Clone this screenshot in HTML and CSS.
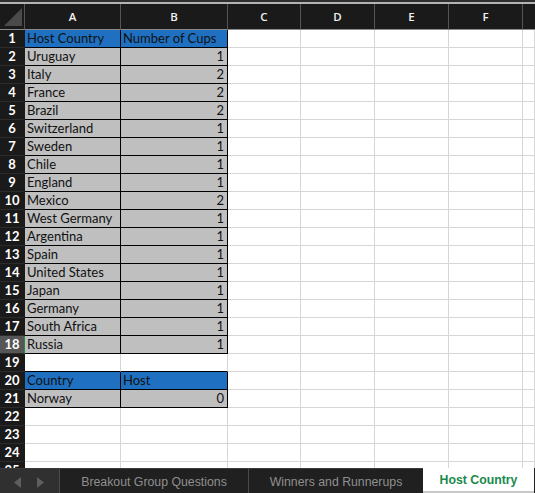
FILE: index.html
```html
<!DOCTYPE html>
<html>
<head>
<meta charset="utf-8">
<link rel="stylesheet" href="styles.css">
</head>
<body>
<div class="topstrip"></div>
<div class="sheet">
  <div class="row hdr">
    <div class="corner"><svg width="25" height="26" viewBox="0 0 25 26"><polygon points="4,22 22,22 22,4" fill="#4a4a4a"/></svg></div>
    <div class="ch">A</div><div class="ch">B</div><div class="ch">C</div><div class="ch">D</div><div class="ch">E</div><div class="ch">F</div><div class="ch last"></div>
  </div>
  <div class="row"><div class="rh">1</div><div class="c h">Host Country</div><div class="c h">Number of Cups</div><div class="c"></div><div class="c"></div><div class="c"></div><div class="c"></div><div class="c"></div></div>
  <div class="row"><div class="rh">2</div><div class="c g">Uruguay</div><div class="c g n">1</div><div class="c"></div><div class="c"></div><div class="c"></div><div class="c"></div><div class="c"></div></div>
  <div class="row"><div class="rh">3</div><div class="c g">Italy</div><div class="c g n">2</div><div class="c"></div><div class="c"></div><div class="c"></div><div class="c"></div><div class="c"></div></div>
  <div class="row"><div class="rh">4</div><div class="c g">France</div><div class="c g n">2</div><div class="c"></div><div class="c"></div><div class="c"></div><div class="c"></div><div class="c"></div></div>
  <div class="row"><div class="rh">5</div><div class="c g">Brazil</div><div class="c g n">2</div><div class="c"></div><div class="c"></div><div class="c"></div><div class="c"></div><div class="c"></div></div>
  <div class="row"><div class="rh">6</div><div class="c g">Switzerland</div><div class="c g n">1</div><div class="c"></div><div class="c"></div><div class="c"></div><div class="c"></div><div class="c"></div></div>
  <div class="row"><div class="rh">7</div><div class="c g">Sweden</div><div class="c g n">1</div><div class="c"></div><div class="c"></div><div class="c"></div><div class="c"></div><div class="c"></div></div>
  <div class="row"><div class="rh">8</div><div class="c g">Chile</div><div class="c g n">1</div><div class="c"></div><div class="c"></div><div class="c"></div><div class="c"></div><div class="c"></div></div>
  <div class="row"><div class="rh">9</div><div class="c g">England</div><div class="c g n">1</div><div class="c"></div><div class="c"></div><div class="c"></div><div class="c"></div><div class="c"></div></div>
  <div class="row"><div class="rh">10</div><div class="c g">Mexico</div><div class="c g n">2</div><div class="c"></div><div class="c"></div><div class="c"></div><div class="c"></div><div class="c"></div></div>
  <div class="row"><div class="rh">11</div><div class="c g">West Germany</div><div class="c g n">1</div><div class="c"></div><div class="c"></div><div class="c"></div><div class="c"></div><div class="c"></div></div>
  <div class="row"><div class="rh">12</div><div class="c g">Argentina</div><div class="c g n">1</div><div class="c"></div><div class="c"></div><div class="c"></div><div class="c"></div><div class="c"></div></div>
  <div class="row"><div class="rh">13</div><div class="c g">Spain</div><div class="c g n">1</div><div class="c"></div><div class="c"></div><div class="c"></div><div class="c"></div><div class="c"></div></div>
  <div class="row"><div class="rh">14</div><div class="c g">United States</div><div class="c g n">1</div><div class="c"></div><div class="c"></div><div class="c"></div><div class="c"></div><div class="c"></div></div>
  <div class="row"><div class="rh">15</div><div class="c g">Japan</div><div class="c g n">1</div><div class="c"></div><div class="c"></div><div class="c"></div><div class="c"></div><div class="c"></div></div>
  <div class="row"><div class="rh">16</div><div class="c g">Germany</div><div class="c g n">1</div><div class="c"></div><div class="c"></div><div class="c"></div><div class="c"></div><div class="c"></div></div>
  <div class="row"><div class="rh">17</div><div class="c g">South Africa</div><div class="c g n">1</div><div class="c"></div><div class="c"></div><div class="c"></div><div class="c"></div><div class="c"></div></div>
  <div class="row"><div class="rh sel">18</div><div class="c g">Russia</div><div class="c g n">1</div><div class="c"></div><div class="c"></div><div class="c"></div><div class="c"></div><div class="c"></div></div>
  <div class="row"><div class="rh">19</div><div class="c bb"></div><div class="c bb"></div><div class="c"></div><div class="c"></div><div class="c"></div><div class="c"></div><div class="c"></div></div>
  <div class="row"><div class="rh">20</div><div class="c h">Country</div><div class="c h">Host</div><div class="c"></div><div class="c"></div><div class="c"></div><div class="c"></div><div class="c"></div></div>
  <div class="row"><div class="rh">21</div><div class="c g">Norway</div><div class="c g n">0</div><div class="c"></div><div class="c"></div><div class="c"></div><div class="c"></div><div class="c"></div></div>
  <div class="row"><div class="rh">22</div><div class="c"></div><div class="c"></div><div class="c"></div><div class="c"></div><div class="c"></div><div class="c"></div><div class="c"></div></div>
  <div class="row"><div class="rh">23</div><div class="c"></div><div class="c"></div><div class="c"></div><div class="c"></div><div class="c"></div><div class="c"></div><div class="c"></div></div>
  <div class="row"><div class="rh">24</div><div class="c"></div><div class="c"></div><div class="c"></div><div class="c"></div><div class="c"></div><div class="c"></div><div class="c"></div></div>
  <div class="row"><div class="rh">25</div><div class="c"></div><div class="c"></div><div class="c"></div><div class="c"></div><div class="c"></div><div class="c"></div><div class="c"></div></div>
</div>
<div class="tabbar">
  <div class="arrows">
    <svg width="7" height="11" viewBox="0 0 7 11"><polygon points="7,0 7,11 0,5.5" fill="#5e5e5e"/></svg>
    <svg width="7" height="11" viewBox="0 0 7 11"><polygon points="0,0 0,11 7,5.5" fill="#5e5e5e"/></svg>
  </div>
  <div class="tab t1">Breakout Group Questions</div>
  <div class="tab t2">Winners and Runnerups</div>
  <div class="tab active">Host Country</div>
</div>
</body>
</html>
```

FILE: styles.css
```css
html, body {
  margin: 0;
  padding: 0;
  background: #1b1b1b;
  width: 535px;
  height: 493px;
  overflow: hidden;
}

.topstrip {
  height: 2px;
  border-top: 2px solid #2e2e2e;
  background: #b4b4b4;
}

.sheet {
  height: 464px;
  overflow: hidden;
  background: #ffffff;
  font-family: Lato, "Noto Sans", sans-serif;
  font-size: 13px;
  color: #111;
}

.row {
  display: grid;
  grid-template-columns: 25px 96px 107px 73px 74px 74px 74px 1fr;
  height: 18px;
}

.row.hdr {
  height: 26px;
  background: #1a1a1a;
}

.corner {
  box-sizing: border-box;
  border-right: 1px solid #555;
  border-bottom: 1px solid #8a8a8a;
  height: 26px;
}

.corner svg {
  display: block;
}

.ch {
  box-sizing: border-box;
  height: 26px;
  border-right: 1px solid #555;
  border-bottom: 1px solid #8a8a8a;
  color: #f2f2f2;
  font-family: "Open Sans", "Noto Sans", sans-serif;
  font-weight: 600;
  font-size: 11.5px;
  text-align: center;
  line-height: 25px;
}

.ch.last {
  border-right: none;
}

.rh {
  box-sizing: border-box;
  height: 18px;
  background: #1a1a1a;
  border-bottom: 1px solid #2c2c2c;
  border-right: 1px solid #1a1a1a;
  color: #ffffff;
  font-weight: 700;
  font-size: 13px;
  text-align: center;
  line-height: 17px;
}

.rh.sel {
  background: #565656;
  border-right: 1px solid #1f8a4c;
}

.c {
  box-sizing: border-box;
  height: 18px;
  border-right: 1px solid #d6d6d6;
  border-bottom: 1px solid #d6d6d6;
  padding: 0 3px 0 2px;
  line-height: 17px;
  white-space: nowrap;
  overflow: hidden;
}

.c.h {
  background: #1f70c1;
  border-right-color: #000;
  border-bottom-color: #000;
}

.c.g {
  background: #bfbfbf;
  border-right-color: #000;
  border-bottom-color: #000;
}

.c.n {
  text-align: right;
}

.c.bb {
  border-bottom-color: #000;
}

.tabbar {
  display: flex;
  height: 25px;
  box-sizing: border-box;
  background: #202020;
  font-family: "Liberation Sans", Arial, sans-serif;
  font-size: 12.3px;
}

.arrows {
  box-sizing: border-box;
  width: 60px;
  background: #303030;
  border-right: 1px solid #4a4a4a;
  border-top: 1px solid #3a3a3a;
  display: flex;
  align-items: center;
  padding-left: 14px;
  gap: 16px;
}

.arrows svg {
  display: block;
  margin-top: 2px;
}

.tab {
  box-sizing: border-box;
  color: #8f8f8f;
  text-align: center;
  line-height: 26px;
  border-top: 1px solid #3a3a3a;
}

.t1 {
  width: 189px;
  border-right: 1px solid #4a4a4a;
}

.t2 {
  width: 174px;
}

.active {
  width: 111px;
  background: #ffffff;
  color: #1a8a4c;
  font-weight: 700;
  border-top: none;
  border-bottom: 2px solid #c8c8c8;
  line-height: 25px;
}
```
